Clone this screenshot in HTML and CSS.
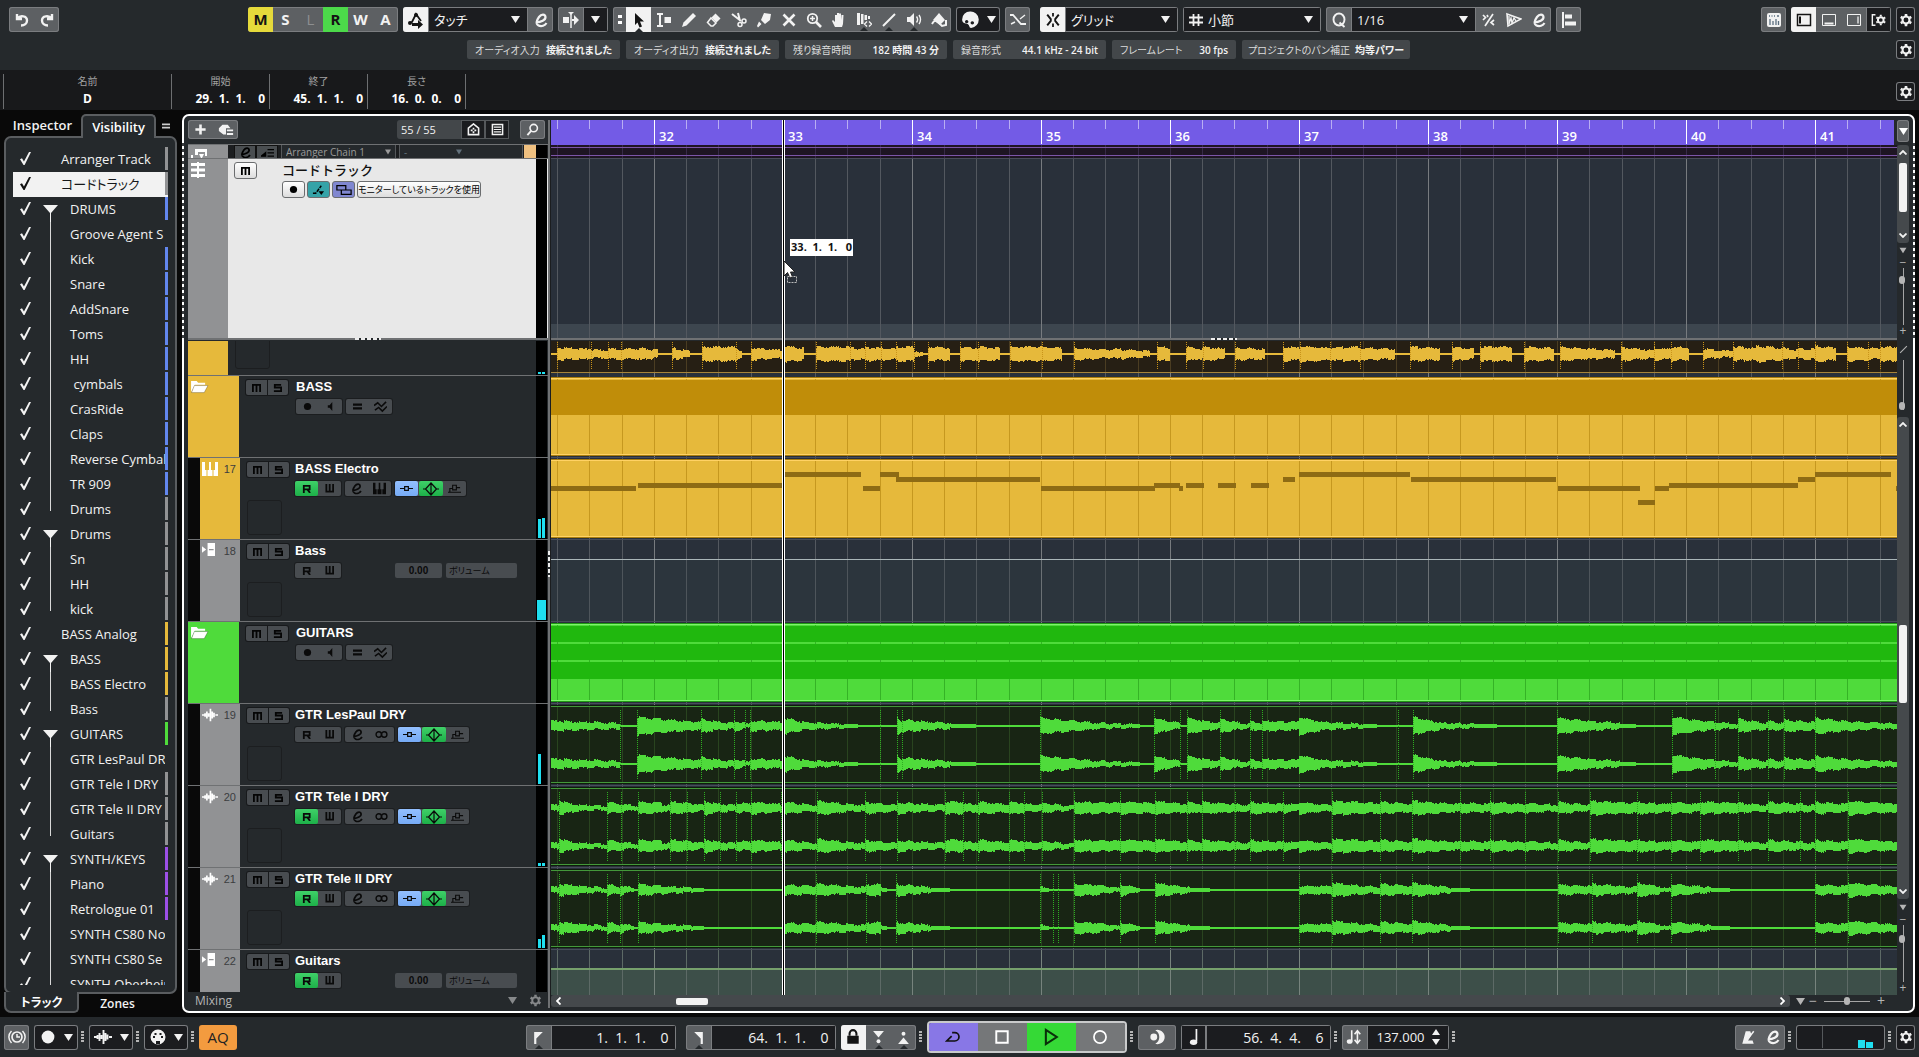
FILE: index.html
```html
<!DOCTYPE html>
<html lang="ja">
<head>
<meta charset="utf-8">
<meta name="viewport" content="width=device-width, initial-scale=1">
<title>Project</title>
<link rel="stylesheet" href="styles.css">
</head>
<body>
<svg class="sprite" aria-hidden="true">
  <symbol id="undo" viewBox="0 0 16 16"><path d="M3 2v5h5M3.500 6.500C6 3 13 3.500 13 8.500c0 3-2.500 5-6 5" fill="none" stroke="currentColor" stroke-width="2.400"/></symbol>
  <symbol id="redo" viewBox="0 0 16 16"><path d="M13 2v5H8M12.500 6.500C10 3 3 3.500 3 8.500c0 3 2.500 5 6 5" fill="none" stroke="currentColor" stroke-width="2.400"/></symbol>
  <symbol id="auto" viewBox="0 0 18 18"><path d="M2 12l3-1 4-8 5 7" fill="none" stroke="currentColor" stroke-width="1.800"/><circle cx="9" cy="4" r="2" fill="currentColor"/><circle cx="3" cy="12" r="2" fill="currentColor"/><path d="M5 12h6v-3l5 4.500-5 4.500v-3H5z" fill="currentColor"/></symbol>
  <symbol id="e" viewBox="0 0 16 16"><path d="M3 10.500C8 10 12.800 8 12.500 5S8.500 1.500 6 5s-3.500 7-.5 8.500 6.500 0 8-2.500" fill="none" stroke="currentColor" stroke-width="2.200"/></symbol>
  <symbol id="scroll" viewBox="0 0 18 18"><path d="M1 6h6v6H1zM10 8h2V4l5 5-5 5v-4h-2z" fill="currentColor"/><path d="M9 2v15" stroke="currentColor" stroke-width="1.500"/><path d="M6 1h6L9 4z" fill="currentColor"/></symbol>
  <symbol id="tri" viewBox="0 0 10 10"><path d="M0 1h10L5 9z" fill="currentColor"/></symbol>
  <symbol id="arrow" viewBox="0 0 16 16"><path d="M4 1l9 8.500H9l2 5-2.500 1-2-5L4 13z" fill="currentColor"/></symbol>
  <symbol id="range" viewBox="0 0 16 16"><path d="M1 2h6M1 14h6M4 2v12" stroke="currentColor" stroke-width="2" fill="none"/><path d="M8.500 5H15v6H8.500z" fill="currentColor"/></symbol>
  <symbol id="pencil" viewBox="0 0 16 16"><path d="M1 15l1.500-4.500L12 1l3 3-9.500 9.500z" fill="currentColor"/></symbol>
  <symbol id="eraser" viewBox="0 0 16 16"><path d="M9.500 1.500l5 5-4 4-5-5z" fill="currentColor"/><path d="M5 6l5 5-3 3H5l-3.500-3.500z" fill="none" stroke="currentColor" stroke-width="1.500"/></symbol>
  <symbol id="scissors" viewBox="0 0 16 16"><path d="M1 2l9 7M7 1l2 8" stroke="currentColor" stroke-width="2"/><circle cx="13" cy="9" r="2" fill="none" stroke="currentColor" stroke-width="1.500"/><circle cx="9" cy="12.500" r="2" fill="none" stroke="currentColor" stroke-width="1.500"/></symbol>
  <symbol id="glue" viewBox="0 0 16 16"><path d="M8 1l7 1-1 6-5 4-4-4zM3 9.500l2.500 2.500L2 15.500 1 14z" fill="currentColor"/></symbol>
  <symbol id="x" viewBox="0 0 16 16"><path d="M2.500 2.500l11 11M13.500 2.500l-11 11" stroke="currentColor" stroke-width="2.600"/></symbol>
  <symbol id="zoom" viewBox="0 0 16 16"><circle cx="6.500" cy="6.500" r="4.700" fill="none" stroke="currentColor" stroke-width="1.800"/><path d="M10 10l5 5" stroke="currentColor" stroke-width="2.600"/><path d="M4 6.500h5M6.500 4v5" stroke="currentColor" stroke-width="1.500"/></symbol>
  <symbol id="hand" viewBox="0 0 16 16"><path d="M4 15L1 9l1-1 2 2V3h2v5V1h2v7V1.500h2V8l.5-5h2L12 12l-1 3z" fill="currentColor"/></symbol>
  <symbol id="comp" viewBox="0 0 16 16"><path d="M1 1h3v12H1zM5 2h2.500v10H5zM8.500 3H11v5H8.500zM12 4h2v3h-2z" fill="currentColor"/><path d="M11 9.500L8.500 12l2.500 2.500M13 9.500l2.500 2.500-2.500 2.500" stroke="currentColor" fill="none" stroke-width="1.300"/></symbol>
  <symbol id="line" viewBox="0 0 16 16"><path d="M2 14L14 2" stroke="currentColor" stroke-width="2"/></symbol>
  <symbol id="spk" viewBox="0 0 16 16"><path d="M1 5h3l4-4v13l-4-4H1z" fill="currentColor"/><path d="M10.500 4.500c1.500 2 1.500 4 0 6M13 3c2 3 2 6 0 9" stroke="currentColor" fill="none" stroke-width="1.400"/></symbol>
  <symbol id="fill" viewBox="0 0 16 16"><path d="M8 1l6 7-5 5-7-5z" fill="currentColor"/><path d="M1 12c2-4 4-4 7-1l3 3 4-1V8" fill="none" stroke="currentColor" stroke-width="2"/></symbol>
  <symbol id="palette" viewBox="0 0 16 16"><path fill-rule="evenodd" d="M8 .5A7 7 0 0 1 9 15c-2 0-1-2-3-3.500C4 11 1 11 1 7.500A7 7 0 0 1 8 .5zM5 8a1.500 1.500 0 1 0 .1 0zM10 9a1.500 1.500 0 1 0 .1 0z" fill="currentColor"/></symbol>
  <symbol id="cross" viewBox="0 0 18 18"><path d="M1 4h3l8 9h5" fill="none" stroke="currentColor" stroke-width="1.800"/><path d="M11 8l5-4M2 13l4-2" stroke="currentColor" stroke-width="1.400"/></symbol>
  <symbol id="snap" viewBox="0 0 18 18"><path d="M9 1v4M9 13v4" stroke="currentColor" stroke-width="2"/><path d="M2.500 3l4 5v2l-4 5M15.500 3l-4 5v2l4 5" stroke="currentColor" stroke-width="2.200" fill="none"/></symbol>
  <symbol id="hash" viewBox="0 0 14 14"><path d="M4.500 1v12M9.500 1v12M0 4.500h14M0 9.500h14" stroke="currentColor" stroke-width="1.800"/></symbol>
  <symbol id="q" viewBox="0 0 16 16"><ellipse cx="8" cy="7.500" rx="5.500" ry="6" fill="none" stroke="currentColor" stroke-width="1.900"/><path d="M8.500 10.500l5 4.500" stroke="currentColor" stroke-width="1.900"/></symbol>
  <symbol id="iq" viewBox="0 0 16 16"><path d="M12 2L4 14M2 3l2.500 2.500L2 8M6 3l1 2M13 8l-3 2.500L13 13" stroke="currentColor" stroke-width="1.700" fill="none"/></symbol>
  <symbol id="warp" viewBox="0 0 16 16"><path d="M1 2l14 5L2 14z" fill="none" stroke="currentColor" stroke-width="1.600"/><path d="M3 4v8l2-6 1 5 2-5 2 3" fill="none" stroke="currentColor" stroke-width="1.300"/></symbol>
  <symbol id="align" viewBox="0 0 16 16"><path d="M1 0h2v16H1zM4 2.500h7v4H4zM4 9.500h11v4H4z" fill="currentColor"/></symbol>
  <symbol id="kbd" viewBox="0 0 16 16"><rect x="1" y="1" width="14" height="14" rx="2" fill="currentColor"/><path d="M4 7v6M7 9v4M10 7v6M12.500 9v4M3 4h1M5.500 4h1M8 4h1M11 4h2" stroke="#5b6f80" stroke-width="1.300"/></symbol>
  <symbol id="zl" viewBox="0 0 16 16"><path d="M1.500 2.500h13v11h-13z" fill="none" stroke="currentColor" stroke-width="1.500"/><path d="M4 4.500v7" stroke="currentColor" stroke-width="2"/></symbol>
  <symbol id="zb" viewBox="0 0 16 16"><path d="M1.500 2.500h13v11h-13z" fill="none" stroke="currentColor" stroke-width="1"/><path d="M3.500 11.500h9" stroke="currentColor" stroke-width="2"/></symbol>
  <symbol id="zr" viewBox="0 0 16 16"><path d="M1.500 2.500h13v11h-13z" fill="none" stroke="currentColor" stroke-width="1"/><path d="M12 4.500v7" stroke="currentColor" stroke-width="1.300"/></symbol>
  <symbol id="gear" viewBox="0 0 16 16"><circle cx="8" cy="8" r="4" fill="none" stroke="currentColor" stroke-width="2.400"/><path d="M8 1v2.500M8 12.500V15M2 4.500l2 1.200M12 10.300l2 1.200M14 4.500l-2 1.200M4 10.300l-2 1.200" stroke="currentColor" stroke-width="3"/></symbol>
  <symbol id="zg" viewBox="0 0 18 16"><path d="M5 2H1.500v12H5" fill="none" stroke="currentColor" stroke-width="1.600"/><circle cx="11" cy="8" r="3.200" fill="none" stroke="currentColor" stroke-width="2.200"/><path d="M11 2v2M11 12v2M6 5l1.500 1M14.500 10l1.500 1M16 5l-1.500 1M7.500 10L6 11" stroke="currentColor" stroke-width="2.200"/></symbol>
  <symbol id="plus" viewBox="0 0 14 14"><path d="M7 1.500v11M1.500 7h11" stroke="currentColor" stroke-width="2.800"/></symbol>
  <symbol id="preset" viewBox="0 0 18 16"><path d="M5 2h6l3 4H9v7H6L1 9V6z" fill="currentColor"/><path d="M10 8.500h7M10 12.500h7" stroke="currentColor" stroke-width="2"/></symbol>
  <symbol id="house" viewBox="0 0 14 14"><path d="M1.500 5.500L7 1l5.500 4.500v7h-11z" fill="none" stroke="currentColor" stroke-width="1.700"/><path d="M4 8h2M8 8h2M7 5v2M7 9v2" stroke="currentColor" stroke-width="1.800"/></symbol>
  <symbol id="list" viewBox="0 0 14 14"><path d="M1.500 1.500h11v11h-11z" fill="none" stroke="currentColor" stroke-width="1.600"/><path d="M3 4.500h8M3 7h8M3 9.500h8" stroke="currentColor" stroke-width="1.300"/></symbol>
  <symbol id="find" viewBox="0 0 14 14"><circle cx="8.300" cy="5.500" r="4" fill="none" stroke="currentColor" stroke-width="1.700"/><path d="M5.500 8.500L1.500 13" stroke="currentColor" stroke-width="2"/></symbol>
  <symbol id="chord" viewBox="0 0 16 16"><path d="M8 0v16" stroke="currentColor" stroke-width="2"/><path d="M1 2.500h14M1 8h14M1 13.500h14" stroke="currentColor" stroke-width="3.200"/></symbol>
  <symbol id="arr" viewBox="0 0 18 12"><path d="M1 7h2v5H1zM5 1h12v7h-2V4H8v3H5zM9 6h5l-2.500 5z" fill="currentColor"/></symbol>
  <symbol id="folder" viewBox="0 0 20 16"><path d="M1 14V2h6l1.500 2H16v2H5z" fill="currentColor"/><path d="M4.500 7H19l-4 7.500H1.500z" fill="currentColor" stroke="#00000050" stroke-width=".8"/></symbol>
  <symbol id="keys" viewBox="0 0 16 14"><path d="M0 0h3v8h1.500v6H0zM5.500 14V8H7V0h2v8h1.500v6zM13 0h3v14h-4.500V8H13z" fill="currentColor"/></symbol>
  <symbol id="chan" viewBox="0 0 14 14"><path d="M0 3.500L4.500 7 0 10.500z" fill="currentColor"/><path fill-rule="evenodd" d="M6 0h8v14H6zM7.500 6.500v1.200h5V6.500z" fill="currentColor"/></symbol>
  <symbol id="wave" viewBox="0 0 18 14"><path d="M0 7h3M3.500 5v4M5.500 3v8M7.500 5v4M9.500 0v14M11.500 3v8M13.500 4.500v5M15 7h3" stroke="currentColor" stroke-width="1.900"/></symbol>
  <symbol id="m" viewBox="0 0 10 10"><path d="M1 10V2h8v8M5 2v8" fill="none" stroke="currentColor" stroke-width="2"/></symbol>
  <symbol id="s" viewBox="0 0 10 10"><path d="M9 2H2v3h7v4H1" fill="none" stroke="currentColor" stroke-width="2"/></symbol>
  <symbol id="r" viewBox="0 0 10 10"><path d="M2 10V2h6.500v4H2M6 6l3 4" fill="none" stroke="currentColor" stroke-width="2"/></symbol>
  <symbol id="w" viewBox="0 0 10 10"><path d="M1.500 0v8.500h7.500V0M5.200 0v8" fill="none" stroke="currentColor" stroke-width="2"/></symbol>
  <symbol id="dot" viewBox="0 0 10 10"><circle cx="5" cy="5" r="4" fill="currentColor"/></symbol>
  <symbol id="mon" viewBox="0 0 10 10"><path d="M2 3.500h2L7 0v10L4 6.500H2z" fill="currentColor"/></symbol>
  <symbol id="eq" viewBox="0 0 10 10"><path d="M0 3h10M0 7h10" stroke="currentColor" stroke-width="2.400"/></symbol>
  <symbol id="zig" viewBox="0 0 14 12"><path d="M0 5l4-3 4 4 5-5M1 10l4-3 4 4 5-5" fill="none" stroke="currentColor" stroke-width="1.700"/></symbol>
  <symbol id="oo" viewBox="0 0 12 8"><circle cx="3.500" cy="4" r="2.500" fill="none" stroke="currentColor" stroke-width="1.300"/><circle cx="8.500" cy="4" r="2.500" fill="none" stroke="currentColor" stroke-width="1.300"/></symbol>
  <symbol id="ins" viewBox="0 0 14 10"><path d="M0 5h5M9 5h5M5 3h4v4H5z" fill="none" stroke="currentColor" stroke-width="1.300"/></symbol>
  <symbol id="eqd" viewBox="0 0 16 14"><path d="M0 7h3M13 7h3M8 1L2.500 7 8 13l5.500-6zM8 1v12" fill="none" stroke="currentColor" stroke-width="1.200"/></symbol>
  <symbol id="snd" viewBox="0 0 14 10"><path d="M0 9h14M2 9V5h3M9 4h4M5 1.500h4v5H5z" fill="none" stroke="currentColor" stroke-width="1.200"/></symbol>
  <symbol id="flagl" viewBox="0 0 10 12"><path d="M1 1h8L3 7v5H1z" fill="currentColor"/></symbol>
  <symbol id="flagr" viewBox="0 0 10 12"><path d="M9 1H1l6 6v5h2z" fill="currentColor"/></symbol>
  <symbol id="lock" viewBox="0 0 12 14"><path d="M1 6h10v7H1z" fill="currentColor"/><path d="M3 6V4a3 3 0 0 1 6 0v2" fill="none" stroke="currentColor" stroke-width="1.800"/></symbol>
  <symbol id="pin" viewBox="0 0 10 12"><path d="M0 0h10L5 6z" fill="currentColor"/><circle cx="5" cy="9.500" r="1.800" fill="currentColor"/></symbol>
  <symbol id="pout" viewBox="0 0 10 12"><path d="M0 12h10L5 6z" fill="currentColor"/><circle cx="5" cy="2.500" r="1.800" fill="currentColor"/></symbol>
  <symbol id="cycle" viewBox="0 0 18 14"><path d="M8 2h3a4.500 4.500 0 0 1 0 9.500H2L7.500 6" fill="none" stroke="currentColor" stroke-width="1.900"/></symbol>
  <symbol id="stop" viewBox="0 0 14 14"><path d="M2 2h10v10H2z" fill="none" stroke="currentColor" stroke-width="1.700"/></symbol>
  <symbol id="play" viewBox="0 0 14 14"><path d="M3 1.500L11.500 7 3 12.500z" fill="none" stroke="currentColor" stroke-width="1.600"/></symbol>
  <symbol id="rec" viewBox="0 0 14 14"><circle cx="7" cy="7" r="5.300" fill="none" stroke="currentColor" stroke-width="1.500"/></symbol>
  <symbol id="punch" viewBox="0 0 14 14"><circle cx="4.200" cy="7" r="3" fill="currentColor"/><path d="M5.500 1A6.300 6.300 0 1 1 5.500 13a7 7 0 0 0 3.500-6A7 7 0 0 0 5.500 1z" fill="currentColor"/></symbol>
  <symbol id="note" viewBox="0 0 10 14"><path d="M8 0v11" stroke="currentColor" stroke-width="1.500"/><ellipse cx="5.500" cy="11.500" rx="3.200" ry="2.400" fill="currentColor"/></symbol>
  <symbol id="tempo" viewBox="0 0 14 14"><path d="M5 1v10" stroke="currentColor" stroke-width="1.400"/><ellipse cx="3.200" cy="11" rx="2.500" ry="2" fill="currentColor"/><path d="M10 2v10M7.500 4.500L10 1.500l2.500 3M7.500 9.500l2.500 3 2.500-3" stroke="currentColor" stroke-width="1.400" fill="none"/></symbol>
  <symbol id="updn" viewBox="0 0 8 18"><path d="M0 7l4-6 4 6zM0 11h8l-4 6z" fill="currentColor"/></symbol>
  <symbol id="metro" viewBox="0 0 12 14"><path d="M1 13L4 2h4l1 3-3 5h4l1 3z" fill="currentColor"/><path d="M5 10l6-8" stroke="currentColor" stroke-width="1.300"/></symbol>
  <symbol id="clock" viewBox="0 0 18 16"><circle cx="9" cy="8" r="5" fill="none" stroke="currentColor" stroke-width="1.700"/><path d="M9 5v3h3M3.500 2C0 5.500 0 10.500 3.500 14M14.500 2c3.500 3.500 3.500 8.500 0 12" fill="none" stroke="currentColor" stroke-width="1.500"/></symbol>
  <symbol id="midi" viewBox="0 0 16 16"><path fill-rule="evenodd" d="M8 .5a7.500 7.500 0 1 1 0 15 7.500 7.500 0 0 1 0-15zM6 12v3h4v-3zM3 7v2h2V7zM11 7v2h2V7zM4.500 4v2h2V4zM9.500 4v2h2V4z" fill="currentColor"/></symbol>
  <symbol id="up" viewBox="0 0 8 5"><path d="M.5 4.500L4 1l3.500 3.500" fill="none" stroke="currentColor" stroke-width="1.800"/></symbol>
  <symbol id="down" viewBox="0 0 8 5"><path d="M.5.5L4 4 7.500.5" fill="none" stroke="currentColor" stroke-width="1.800"/></symbol>
  <symbol id="left" viewBox="0 0 5 8"><path d="M4.500.5L1 4l3.500 3.500" fill="none" stroke="currentColor" stroke-width="1.800"/></symbol>
  <symbol id="right" viewBox="0 0 5 8"><path d="M.5.5L4 4 .5 7.500" fill="none" stroke="currentColor" stroke-width="1.800"/></symbol>
  <symbol id="cfol" viewBox="0 0 14 12"><path d="M1 10h3l6-8" fill="none" stroke="currentColor" stroke-width="1.500" stroke-dasharray="4 1"/><path d="M7 8h6l-3 4z" fill="currentColor"/></symbol>
  <symbol id="lanes" viewBox="0 0 18 12"><path d="M1 1h10v5H1zM6 6h11v5H6z" fill="none" stroke="currentColor" stroke-width="1.400"/></symbol>
  <symbol id="fold2" viewBox="0 0 14 10"><path d="M0 9l5-4v4zM7 2h7M7 5.500h7M7 9h7" fill="currentColor" stroke="currentColor" stroke-width="1.400"/></symbol>
</svg>

<header class="toolbar">
  <div class="group"><button aria-label="元に戻す"><svg class="i"><use href="#undo"/></svg></button><button aria-label="再実行"><svg class="i"><use href="#redo"/></svg></button></div>
  <div class="center">
    <div class="group letters"><button class="mute">M</button><button>S</button><button class="off">L</button><button class="read">R</button><button>W</button><button>A</button></div>
    <div class="group"><button class="on" aria-label="オートメーション"><svg class="i l"><use href="#auto"/></svg></button><span class="drop w100"><select aria-label="オートメーションモード"><option>タッチ</option></select><svg class="t"><use href="#tri"/></svg></span><button aria-label="設定"><svg class="i"><use href="#e"/></svg></button></div>
    <div class="group"><button aria-label="オートスクロール"><svg class="i l"><use href="#scroll"/></svg></button><button class="dark" aria-label="オートスクロール設定"><svg class="t"><use href="#tri"/></svg></button></div>
    <div class="group tools"><span class="grip"></span><button class="on more" aria-label="選択"><svg class="i"><use href="#arrow"/></svg></button><button aria-label="範囲"><svg class="i"><use href="#range"/></svg></button><button aria-label="鉛筆"><svg class="i"><use href="#pencil"/></svg></button><button aria-label="消しゴム"><svg class="i"><use href="#eraser"/></svg></button><button aria-label="はさみ"><svg class="i"><use href="#scissors"/></svg></button><button aria-label="のり"><svg class="i"><use href="#glue"/></svg></button><button aria-label="ミュート"><svg class="i"><use href="#x"/></svg></button><button aria-label="ズーム"><svg class="i"><use href="#zoom"/></svg></button><button aria-label="ハンド"><svg class="i"><use href="#hand"/></svg></button><button class="more" aria-label="コンプ"><svg class="i"><use href="#comp"/></svg></button><button class="more" aria-label="ライン"><svg class="i"><use href="#line"/></svg></button><button class="more" aria-label="再生"><svg class="i"><use href="#spk"/></svg></button><button aria-label="カラー"><svg class="i"><use href="#fill"/></svg></button></div>
    <div class="group"><button class="dark wide" aria-label="カラーメニュー"><svg class="i l"><use href="#palette"/></svg><svg class="t"><use href="#tri"/></svg></button></div>
    <div class="group"><button aria-label="クロスフェード"><svg class="i l"><use href="#cross"/></svg></button></div>
    <div class="group snap"><button class="on" aria-label="スナップ"><svg class="i"><use href="#snap"/></svg></button><span class="drop w112"><select aria-label="スナップタイプ"><option>グリッド</option></select><svg class="t"><use href="#tri"/></svg></span></div>
    <div class="group"><span class="drop w136 hashed"><svg class="h"><use href="#hash"/></svg><select aria-label="グリッドタイプ"><option>小節</option></select><svg class="t"><use href="#tri"/></svg></span></div>
    <div class="group"><button aria-label="クオンタイズ"><svg class="i"><use href="#q"/></svg></button><span class="drop w125"><select aria-label="クオンタイズ値"><option>1/16</option></select><svg class="t"><use href="#tri"/></svg></span><button aria-label="反復"><svg class="i"><use href="#iq"/></svg></button><button aria-label="ワープ"><svg class="i"><use href="#warp"/></svg></button><button aria-label="クオンタイズパネル"><svg class="i"><use href="#e"/></svg></button></div>
    <div class="group"><button aria-label="整列"><svg class="i"><use href="#align"/></svg></button></div>
  </div>
  <div class="right">
    <div class="group"><button aria-label="キーボード"><svg class="i"><use href="#kbd"/></svg></button></div>
    <div class="group"><button class="on" aria-label="左ゾーン"><svg class="i"><use href="#zl"/></svg></button><button aria-label="下ゾーン"><svg class="i"><use href="#zb"/></svg></button><button aria-label="右ゾーン"><svg class="i"><use href="#zr"/></svg></button><button class="dark" aria-label="レイアウト"><svg class="i"><use href="#zg"/></svg></button></div>
    <div class="group"><button class="dark thin" aria-label="ツールバー設定"><svg class="i g"><use href="#gear"/></svg></button></div>
  </div>
</header>

<section class="status">
  <div class="chips">
    <div class="chip"><span>オーディオ入力</span><b>接続されました</b></div>
    <div class="chip"><span>オーディオ出力</span><b>接続されました</b></div>
    <div class="chip wide"><span>残り録音時間</span><b>182 時間 43 分</b></div>
    <div class="chip"><span>録音形式</span><b>44.1 kHz - 24 bit</b></div>
    <div class="chip small"><span>フレームレート</span><b>30 fps</b></div>
    <div class="chip widest"><span>プロジェクトのパン補正</span><b>均等パワー</b></div>
  </div>
  <button class="cog" aria-label="ステータス設定"><svg class="i g"><use href="#gear"/></svg></button>
</section>

<section class="info">
  <dl>
    <div class="name"><dt>名前</dt><dd>D</dd></div>
    <div><dt>開始</dt><dd>29.  1.  1.    0</dd></div>
    <div><dt>終了</dt><dd>45.  1.  1.    0</dd></div>
    <div><dt>長さ</dt><dd>16.  0.  0.    0</dd></div>
  </dl>
  <button class="cog" aria-label="情報設定"><svg class="i g"><use href="#gear"/></svg></button>
</section>

<main>
  <aside>
    <nav class="tabs"><button>Inspector</button><button class="cur">Visibility</button><svg class="menu"><use href="#eq"/></svg></nav>
    <div class="vis">
      <ul>
        <li class="gray"><label><input type="checkbox" checked>Arranger Track</label></li>
        <li class="gray sel"><label><input type="checkbox" checked>コードトラック</label></li>
        <li class="blue head"><label><input type="checkbox" checked>DRUMS</label></li>
        <li class="kid"><label><input type="checkbox" checked>Groove Agent S</label></li>
        <li class="blue kid"><label><input type="checkbox" checked>Kick</label></li>
        <li class="blue kid"><label><input type="checkbox" checked>Snare</label></li>
        <li class="blue kid"><label><input type="checkbox" checked>AddSnare</label></li>
        <li class="blue kid"><label><input type="checkbox" checked>Toms</label></li>
        <li class="blue kid"><label><input type="checkbox" checked>HH</label></li>
        <li class="blue kid"><label><input type="checkbox" checked>&nbsp;cymbals</label></li>
        <li class="blue kid"><label><input type="checkbox" checked>CrasRide</label></li>
        <li class="blue kid"><label><input type="checkbox" checked>Claps</label></li>
        <li class="blue kid"><label><input type="checkbox" checked>Reverse Cymbal</label></li>
        <li class="blue kid"><label><input type="checkbox" checked>TR 909</label></li>
        <li class="gray kid last"><label><input type="checkbox" checked>Drums</label></li>
        <li class="gray head"><label><input type="checkbox" checked>Drums</label></li>
        <li class="gray kid"><label><input type="checkbox" checked>Sn</label></li>
        <li class="gray kid"><label><input type="checkbox" checked>HH</label></li>
        <li class="gray kid last"><label><input type="checkbox" checked>kick</label></li>
        <li class="gold"><label><input type="checkbox" checked>BASS Analog</label></li>
        <li class="gold head"><label><input type="checkbox" checked>BASS</label></li>
        <li class="gold kid"><label><input type="checkbox" checked>BASS Electro</label></li>
        <li class="gray kid last"><label><input type="checkbox" checked>Bass</label></li>
        <li class="green head"><label><input type="checkbox" checked>GUITARS</label></li>
        <li class="kid"><label><input type="checkbox" checked>GTR LesPaul DRY</label></li>
        <li class="gray kid"><label><input type="checkbox" checked>GTR Tele I DRY</label></li>
        <li class="gray kid"><label><input type="checkbox" checked>GTR Tele II DRY</label></li>
        <li class="gray kid last"><label><input type="checkbox" checked>Guitars</label></li>
        <li class="purple head"><label><input type="checkbox" checked>SYNTH/KEYS</label></li>
        <li class="purple kid"><label><input type="checkbox" checked>Piano</label></li>
        <li class="purple kid"><label><input type="checkbox" checked>Retrologue 01</label></li>
        <li class="kid"><label><input type="checkbox" checked>SYNTH CS80 No</label></li>
        <li class="kid"><label><input type="checkbox" checked>SYNTH CS80 Se</label></li>
        <li class="kid"><label><input type="checkbox" checked>SYNTH Oberheim</label></li>
      </ul>
    </div>
    <nav class="tabs bottom"><button class="cur">トラック</button><button>Zones</button></nav>
  </aside>

  <section class="frame">
    <div class="tracks">
      <div class="thead">
        <div class="group sm"><button aria-label="トラックを追加"><svg class="i s"><use href="#plus"/></svg></button><button aria-label="プリセット"><svg class="i"><use href="#preset"/></svg></button></div>
        <div class="count"><span>55 / 55</span><button aria-label="フィルター"><svg class="i s"><use href="#house"/></svg></button><button aria-label="表示"><svg class="i s"><use href="#list"/></svg></button></div>
        <div class="group sm"><button aria-label="検索"><svg class="i s"><use href="#find"/></svg></button></div>
      </div>
      <div class="upper">
        <div class="arrow-row"><span class="swatch gray"><svg class="arr"><use href="#arr"/></svg></span>
          <button class="cell" aria-label="編集"><svg class="i s"><use href="#e"/></svg></button><button class="cell" aria-label="フラット"><svg class="i s"><use href="#fold2"/></svg></button>
          <span class="mini chain"><select aria-label="チェーン"><option>Arranger Chain 1</option></select><svg><use href="#tri"/></svg></span><span class="mini dash"><select aria-label="ジャンプ"><option>-</option></select><svg><use href="#tri"/></svg></span><span class="orange"></span><span class="meter"></span></div>
        <div class="chord-row"><span class="swatch gray"><svg class="i"><use href="#chord"/></svg></span>
          <div class="chord-body"><button class="lt" aria-label="ミュート"><svg class="i x"><use href="#m"/></svg></button>
            <div><h3>コードトラック</h3><div class="lts"><button class="lt" aria-label="録音"><svg class="i x"><use href="#dot"/></svg></button><button class="lt teal" aria-label="ボイシング"><svg class="i s"><use href="#cfol"/></svg></button><button class="lt violet" aria-label="レーン"><svg class="i"><use href="#lanes"/></svg></button><button class="lt long">モニターしているトラックを使用</button></div></div></div>
          <span class="meter"></span></div>
      </div>
      <div class="split"><i></i></div>
      <div class="lower">
        <div class="track part"><span class="swatch gold thin"></span><div class="body"><i class="pic"></i></div><span class="meter"><i style="height:2px"></i><i style="height:2px"></i></span></div>
        <div class="track folder"><span class="swatch gold"><svg class="f"><use href="#folder"/></svg></span><div class="body"><div class="ms"><button aria-label="ミュート"><svg class="i x"><use href="#m"/></svg></button><button aria-label="ソロ"><svg class="i x"><use href="#s"/></svg></button></div><h3>BASS</h3><div class="ctl"><div class="pair"><button aria-label="録音"><svg class="i x"><use href="#dot"/></svg></button><button aria-label="モニター"><svg class="i x"><use href="#mon"/></svg></button></div><div class="pair"><button aria-label="グループ編集"><svg class="i x"><use href="#eq"/></svg></button><button aria-label="位相"><svg class="i s"><use href="#zig"/></svg></button></div></div></div><span class="meter"></span></div>
        <div class="track kid"><span class="swatch gold"><svg class="i"><use href="#keys"/></svg>17</span><div class="body"><div class="ms"><button aria-label="ミュート"><svg class="i x"><use href="#m"/></svg></button><button aria-label="ソロ"><svg class="i x"><use href="#s"/></svg></button></div><h3>BASS Electro</h3><div class="ctl"><div class="pair"><button class="rd" aria-label="リード"><svg class="i x"><use href="#r"/></svg></button><button aria-label="ライト"><svg class="i x"><use href="#w"/></svg></button></div><div class="pair"><button aria-label="編集"><svg class="i s"><use href="#e"/></svg></button><button aria-label="音源"><svg class="i s"><use href="#keys"/></svg></button></div><div class="pair three"><button class="bl" aria-label="インサート"><svg class="i s"><use href="#ins"/></svg></button><button class="rd" aria-label="EQ"><svg class="i"><use href="#eqd"/></svg></button><button aria-label="センド"><svg class="i s"><use href="#snd"/></svg></button></div></div><i class="pic"></i></div><span class="meter"><i style="height:19px"></i><i style="height:20px"></i></span></div>
        <div class="track kid"><span class="swatch gray"><svg class="i s"><use href="#chan"/></svg>18</span><div class="body"><div class="ms"><button aria-label="ミュート"><svg class="i x"><use href="#m"/></svg></button><button aria-label="ソロ"><svg class="i x"><use href="#s"/></svg></button></div><h3>Bass</h3><div class="ctl"><div class="pair"><button aria-label="リード"><svg class="i x"><use href="#r"/></svg></button><button aria-label="ライト"><svg class="i x"><use href="#w"/></svg></button></div><input class="vol" aria-label="値" value="0.00"><button class="par">ボリューム</button></div><i class="pic"></i></div><span class="meter solid"><i style="height:20px"></i></span></div>
        <div class="track folder"><span class="swatch green"><svg class="f"><use href="#folder"/></svg></span><div class="body"><div class="ms"><button aria-label="ミュート"><svg class="i x"><use href="#m"/></svg></button><button aria-label="ソロ"><svg class="i x"><use href="#s"/></svg></button></div><h3>GUITARS</h3><div class="ctl"><div class="pair"><button aria-label="録音"><svg class="i x"><use href="#dot"/></svg></button><button aria-label="モニター"><svg class="i x"><use href="#mon"/></svg></button></div><div class="pair"><button aria-label="グループ編集"><svg class="i x"><use href="#eq"/></svg></button><button aria-label="位相"><svg class="i s"><use href="#zig"/></svg></button></div></div></div><span class="meter"></span></div>
        <div class="track kid"><span class="swatch gray"><svg class="i"><use href="#wave"/></svg>19</span><div class="body"><div class="ms"><button aria-label="ミュート"><svg class="i x"><use href="#m"/></svg></button><button aria-label="ソロ"><svg class="i x"><use href="#s"/></svg></button></div><h3>GTR LesPaul DRY</h3><div class="ctl"><div class="pair"><button aria-label="リード"><svg class="i x"><use href="#r"/></svg></button><button aria-label="ライト"><svg class="i x"><use href="#w"/></svg></button></div><div class="pair aud"><button aria-label="編集"><svg class="i s"><use href="#e"/></svg></button><button aria-label="ステレオ"><svg class="i s"><use href="#oo"/></svg></button></div><div class="pair three"><button class="bl" aria-label="インサート"><svg class="i s"><use href="#ins"/></svg></button><button class="rd" aria-label="EQ"><svg class="i"><use href="#eqd"/></svg></button><button aria-label="センド"><svg class="i s"><use href="#snd"/></svg></button></div></div><i class="pic"></i></div><span class="meter"><i style="height:30px"></i><i style="height:0"></i></span></div>
        <div class="track kid"><span class="swatch gray"><svg class="i"><use href="#wave"/></svg>20</span><div class="body"><div class="ms"><button aria-label="ミュート"><svg class="i x"><use href="#m"/></svg></button><button aria-label="ソロ"><svg class="i x"><use href="#s"/></svg></button></div><h3>GTR Tele I DRY</h3><div class="ctl"><div class="pair"><button class="rd" aria-label="リード"><svg class="i x"><use href="#r"/></svg></button><button aria-label="ライト"><svg class="i x"><use href="#w"/></svg></button></div><div class="pair aud"><button aria-label="編集"><svg class="i s"><use href="#e"/></svg></button><button aria-label="ステレオ"><svg class="i s"><use href="#oo"/></svg></button></div><div class="pair three"><button class="bl" aria-label="インサート"><svg class="i s"><use href="#ins"/></svg></button><button class="rd" aria-label="EQ"><svg class="i"><use href="#eqd"/></svg></button><button aria-label="センド"><svg class="i s"><use href="#snd"/></svg></button></div></div><i class="pic"></i></div><span class="meter"><i style="height:3px"></i><i style="height:3px"></i></span></div>
        <div class="track kid"><span class="swatch gray"><svg class="i"><use href="#wave"/></svg>21</span><div class="body"><div class="ms"><button aria-label="ミュート"><svg class="i x"><use href="#m"/></svg></button><button aria-label="ソロ"><svg class="i x"><use href="#s"/></svg></button></div><h3>GTR Tele II DRY</h3><div class="ctl"><div class="pair"><button class="rd" aria-label="リード"><svg class="i x"><use href="#r"/></svg></button><button aria-label="ライト"><svg class="i x"><use href="#w"/></svg></button></div><div class="pair aud"><button aria-label="編集"><svg class="i s"><use href="#e"/></svg></button><button aria-label="ステレオ"><svg class="i s"><use href="#oo"/></svg></button></div><div class="pair three"><button class="bl" aria-label="インサート"><svg class="i s"><use href="#ins"/></svg></button><button class="rd" aria-label="EQ"><svg class="i"><use href="#eqd"/></svg></button><button aria-label="センド"><svg class="i s"><use href="#snd"/></svg></button></div></div><i class="pic"></i></div><span class="meter"><i style="height:9px"></i><i style="height:13px"></i></span></div>
        <div class="track kid"><span class="swatch gray"><svg class="i s"><use href="#chan"/></svg>22</span><div class="body"><div class="ms"><button aria-label="ミュート"><svg class="i x"><use href="#m"/></svg></button><button aria-label="ソロ"><svg class="i x"><use href="#s"/></svg></button></div><h3>Guitars</h3><div class="ctl"><div class="pair"><button class="rd" aria-label="リード"><svg class="i x"><use href="#r"/></svg></button><button aria-label="ライト"><svg class="i x"><use href="#w"/></svg></button></div><input class="vol" aria-label="値" value="0.00"><button class="par">ボリューム</button></div><i class="pic"></i></div><span class="meter"></span></div>
      </div>
      <div class="mixing"><span>Mixing</span><svg class="t"><use href="#tri"/></svg><svg class="i s"><use href="#gear"/></svg></div>
    </div>
    <div class="vsplit"><i></i></div>
    <div class="time">
      <div class="ruler"></div>
      <div class="lane" data-kind="arranger"></div>
      <div class="lane" data-kind="chord"></div>
      <div class="split"><i></i></div>
      <div class="lanes">
        <div class="lane" data-kind="analog"></div>
        <div class="lane" data-kind="bassfolder"></div>
        <div class="lane" data-kind="electro"></div>
        <div class="lane" data-kind="bass"></div>
        <div class="lane" data-kind="guitars"></div>
        <div class="lane" data-kind="lespaul"></div>
        <div class="lane" data-kind="tele1"></div>
        <div class="lane" data-kind="tele2"></div>
        <div class="lane" data-kind="group"></div>
      </div>
      <div class="hscroll"><div class="bar"><svg class="cv"><use href="#left"/></svg><i></i><svg class="cv"><use href="#right"/></svg></div><svg class="t"><use href="#tri"/></svg><span>−</span><input type="range" aria-label="横ズーム" value="50"><span>+</span></div>
      <div class="cursor"><span class="tip">33.  1.  1.   0</span><svg class="mouse" viewBox="0 0 16 24"><path d="M1 1v15l3.500-3.500L7 18l2.500-1L7.500 12H12z" fill="#fff" stroke="#222"/><rect x="4.500" y="16.500" width="9" height="6" fill="none" stroke="#bbb" stroke-dasharray="2 1"/></svg></div>
    </div>
    <div class="side">
      <button class="top" aria-label="メニュー"><svg class="t"><use href="#tri"/></svg></button>
      <div class="vbar up"><svg class="ch"><use href="#up"/></svg><i></i><svg class="ch"><use href="#down"/></svg></div>
      <div class="vz"><svg class="t"><use href="#tri"/></svg><span>−</span><input type="range" aria-label="縦ズーム" value="16"><span>+</span></div>
      <div class="vz two"><svg class="i x"><use href="#line"/></svg><input type="range" aria-label="波形ズーム" value="100"></div>
      <div class="vbar low"><svg class="ch"><use href="#up"/></svg><i></i><svg class="ch"><use href="#down"/></svg></div>
      <div class="vz end"><svg class="t"><use href="#tri"/></svg><span>−</span><input type="range" aria-label="トラックズーム" value="20"><span>+</span></div>
    </div>
  </section>
</main>

<footer class="transport">
  <div class="group"><button aria-label="時計"><svg class="i l"><use href="#clock"/></svg></button></div>
  <div class="group"><button class="dark wide" aria-label="録音モード"><svg class="i"><use href="#dot"/></svg><svg class="t"><use href="#tri"/></svg></button></div><i class="dots"></i>
  <div class="group"><button class="dark wide" aria-label="オーディオ録音モード"><svg class="i l"><use href="#wave"/></svg><svg class="t"><use href="#tri"/></svg></button></div><i class="dots"></i>
  <div class="group"><button class="dark wide" aria-label="MIDI録音モード"><svg class="i"><use href="#midi"/></svg><svg class="t"><use href="#tri"/></svg></button></div><i class="dots"></i>
  <button class="aq">AQ</button>
  <div class="mid">
    <div class="group"><button class="more" aria-label="左ロケーター"><svg class="i s"><use href="#flagl"/></svg></button><input class="pos" aria-label="左ロケーター位置" value="1.  1.  1.    0"></div>
    <div class="group gapr"><button class="more" aria-label="右ロケーター"><svg class="i s"><use href="#flagr"/></svg></button><input class="pos" aria-label="右ロケーター位置" value="64.  1.  1.    0"></div>
    <div class="group lk"><button class="on" aria-label="ロック"><svg class="i"><use href="#lock"/></svg></button><button class="more" aria-label="パンチイン"><svg class="i s"><use href="#pin"/></svg></button><button class="more" aria-label="パンチアウト"><svg class="i s"><use href="#pout"/></svg></button></div><i class="dots"></i>
    <div class="deck"><button class="cy" aria-label="サイクル"><svg class="i"><use href="#cycle"/></svg></button><button class="st" aria-label="停止"><svg class="i"><use href="#stop"/></svg></button><button class="pl" aria-label="再生"><svg class="i l"><use href="#play"/></svg></button><button class="st" aria-label="録音"><svg class="i"><use href="#rec"/></svg></button></div><i class="dots"></i>
    <div class="group"><button class="pun" aria-label="プリロール"><svg class="i"><use href="#punch"/></svg></button></div>
    <div class="group gapn"><button class="dark nt" aria-label="表示形式"><svg class="i"><use href="#note"/></svg></button><input class="pos" aria-label="現在位置" value="56.  4.  4.    6"></div><i class="dots"></i>
    <div class="group"><button aria-label="テンポトラック"><svg class="i"><use href="#tempo"/></svg></button><input class="pos tempo" aria-label="テンポ" value="137.000"><svg class="ud"><use href="#updn"/></svg></div><i class="dots"></i>
  </div>
  <div class="group"><button aria-label="メトロノーム"><svg class="i"><use href="#metro"/></svg></button><button aria-label="メトロノーム設定"><svg class="i"><use href="#e"/></svg></button></div><i class="dots"></i>
  <div class="group out"><span class="lvl"><i style="height:8px"></i><i style="height:6px"></i></span></div><i class="dots"></i>
  <div class="group"><button class="dark thin" aria-label="トランスポート設定"><svg class="i g"><use href="#gear"/></svg></button></div>
</footer>
<script src="timeline.js"></script>
</body>
</html>
```
FILE: styles.css
```css
* { box-sizing: border-box; }
body {
  margin: 0; height: 100vh; min-height: 600px; display: flex; flex-direction: column;
  background: #090909; color: #f2f2f2; overflow: hidden;
  font: 13px/18px "Open Sans", "Noto Sans", "Noto Sans CJK JP", sans-serif;
  font-feature-settings: "palt" 1;
}
.sprite { display: none; }
button, input, select { font: inherit; color: inherit; margin: 0; padding: 0; border: 0; background: none; border-radius: 0; font-feature-settings: inherit; }
button { display: flex; align-items: center; justify-content: center; }
h3, ul, dl, dd { margin: 0; padding: 0; list-style: none; }
svg { display: block; flex: none; }
.i { width: 16px; height: 16px; }
.i.l { width: 18px; height: 18px; }
.i.s { width: 13px; height: 13px; }
.i.x { width: 9px; height: 9px; }
.t { width: 9px; height: 9px; }

/* toolbar */
.toolbar { display: flex; align-items: flex-start; padding: 7px 4px 0 9px; height: 36px; flex: none; background: #25292c; }
.toolbar .center { display: flex; gap: 5px; margin-left: 189px; flex: none; }
.toolbar .right { display: flex; gap: 5px; margin-left: auto; }
.group { display: flex; height: 25px; flex: none; border-radius: 3px; background: #5d6063; box-shadow: inset 0 0 0 1px #7b7d80; overflow: hidden; align-items: center; }
.group button { width: 25px; height: 23px; position: relative; }
.group .on { background: #f2f2f2; color: #141414; height: 25px; }
.group .dark { background: #1b1c1f; box-shadow: inset 0 0 0 1px #7b7d80; height: 25px; }
.group .wide { width: 44px; gap: 8px; border-radius: 3px; }
.group .thin { width: 19px; border-radius: 3px; }
.letters button { font: bold 15px/23px "Open Sans", sans-serif; height: 25px; }
.letters .mute { background: #e6da3b; color: #141414; }
.letters .read { background: #4cda4a; color: #141414; }
.letters .off { color: #8d8f91; font-weight: 400; }
.drop { position: relative; display: flex; align-items: center; height: 25px; background: #1b1c1f; box-shadow: inset 0 0 0 1px #7b7d80; }
.drop select { appearance: none; width: 100%; height: 23px; padding-left: 6px; font-size: 13px; outline: 0; }
.drop .t { position: absolute; right: 8px; pointer-events: none; }
.w100 { width: 100px; } .w112 { width: 113px; } .w125 { width: 125px; } .w136 { width: 138px; }
.hashed .h { width: 14px; height: 14px; margin-left: 6px; }
.hashed select { padding-left: 5px; }
.grip { width: 13px; height: 9px; background: linear-gradient(#fff 3px, #0000 3px 6px, #fff 6px) center / 4px 9px no-repeat; }
.tools { width: 338px; }
.more::after { content: ""; position: absolute; bottom: 0; left: 9px; border: 4px solid transparent; border-top: 0; border-bottom-color: #25292c; }
.snap { margin-left: 5px; }

/* status chips */
.status { position: relative; display: flex; justify-content: center; padding-top: 4px; height: 34px; flex: none; background: #25292c; }
.chips { display: flex; gap: 6px; margin-right: 42px; }
.chip { display: flex; align-items: center; justify-content: space-between; width: 153px; height: 19px; padding: 0 8px; border-radius: 2px; background: #43474a; font-size: 10px; white-space: nowrap; color: #dcdcdc; }
.chip.wide { width: 162px; } .chip.small { width: 124px; } .chip.widest { width: 168px; padding: 0 6px; }
.chip b { font-weight: 600; color: #f2f2f2; }
.cog { position: absolute; right: 4px; width: 19px; height: 19px; border-radius: 3px; background: #1b1c1f; box-shadow: inset 0 0 0 1px #7b7d80; }
.i.g { width: 14px; height: 14px; }

/* info line */
.info { position: relative; display: flex; height: 40px; flex: none; padding: 4px 0 1px 3px; background: #18191b; }
.info dl { display: flex; }
.info dl div { width: 98px; border-right: 1px solid #6d6f71; padding: 0 4px; }
.info dl .name { width: 169px; border-left: 1px solid #6d6f71; text-align: center; }
.info dt { font-size: 10px; line-height: 15px; color: #a2a2a2; text-align: center; }
.info dd { font: bold 12px/20px "Open Sans", sans-serif; white-space: pre; text-align: right; color: #fff; }
.info .name dd { text-align: center; }
.info .cog { top: 12px; }

/* visibility panel */
main { display: flex; flex: 1; min-height: 0; padding: 4px 4px 4px 0; }
aside { width: 182px; flex: none; padding: 0 5px 0 4px; display: flex; flex-direction: column; }
.tabs { display: flex; height: 22px; flex: none; position: relative; z-index: 1; }
.tabs button { font-weight: 600; width: 77px; height: 22px; }
.tabs .cur { width: 75px; background: #25292c; border: 2px solid #5a5d60; border-bottom: 0; border-radius: 5px 5px 0 0; height: 24px; color: #fff; }
.tabs .menu { width: 8px; height: 10px; margin: 7px 0 0 6px; color: #ccc; }
.vis { flex: 1; min-height: 0; border: 2px solid #5a5d60; border-radius: 7px; background: #25292c; padding: 9px 7px 7px; display: flex; }
.vis ul { overflow: hidden; flex: 1; }
.vis li { height: 25px; position: relative; padding-bottom: 2px; }
.vis label { display: flex; align-items: center; height: 23px; margin-right: 3px; overflow: hidden; white-space: nowrap; }
.vis input { appearance: none; flex: none; width: 11px; height: 13px; margin: 0 30px 0 7px; background: #f2f2f2; clip-path: polygon(0 55%, 18% 48%, 36% 74%, 82% 0, 100% 0, 42% 100%, 32% 100%); }
.vis li::after { content: ""; position: absolute; right: 0; top: 0; width: 3px; height: 23px; background: var(--c, transparent); }
.vis .sel { background: #f2f2f2; color: #16181a; }
.vis .sel input { background: #111; }
.vis .head input, .vis .kid input { margin-right: 39px; }
.vis .head::before { content: ""; position: absolute; left: 30px; top: 8px; width: 15px; height: 17px; background: #f2f2f2; clip-path: polygon(0 0, 100% 0, 8px 8px, 8px 17px, 7px 17px, 7px 8px); }
.vis .kid::before { content: ""; position: absolute; left: 37px; top: 0; width: 1px; height: 25px; background: #d8d8d8; }
.vis .last::before { height: 14px; }
.gray { --c: #919294; } .blue { --c: #6286ee; } .gold { --c: #e6b93b; } .green { --c: #4fdb3b; } .purple { --c: #9c4fe6; }
.tabs.bottom { height: 19px; }
.tabs.bottom .cur { border: 2px solid #5a5d60; border-top: 0; border-radius: 0 0 5px 7px; margin-top: -2px; height: 21px; padding-top: 3px; }
.tabs.bottom button { height: 20px; font-size: 12px; }

/* project frame */
.frame { flex: 1; min-width: 0; position: relative; display: flex; background: #25292c; border: 2px solid #fff; border-radius: 7px; }
.frame::before, .frame::after { content: ""; position: absolute; top: 27px; left: -2px; width: 2px; height: 197px; background: repeating-linear-gradient(#3a3d40 0 3px, #0000 3px 6px); }
.frame::after { left: auto; right: -2px; }
.tracks { width: 364px; flex: none; padding-left: 4px; display: flex; flex-direction: column; }
.thead { display: flex; height: 28px; flex: none; padding: 4px 3px 0 0; }
.group.sm { height: 19px; }
.group.sm button { height: 19px; }
.count { display: flex; height: 19px; width: 112px; margin: 0 11px 0 auto; background: #43474a; border-radius: 3px; font-size: 11px; line-height: 19px; padding-left: 4px; }
.count span { flex: 1; }
.count button { width: 24px; background: #1b1c1f; box-shadow: inset 0 0 0 1px #55585b; }
.upper { height: 194px; flex: none; border-top: 1px solid #6f7173; display: flex; flex-direction: column; }
.arrow-row { display: flex; height: 14px; border-bottom: 1px solid #6f7173; overflow: hidden; background: #1c1e20; }
.swatch { display: flex; flex: none; width: 51px; background: var(--c); color: #fff; padding: 3px 6px 0 2px; justify-content: space-between; font-size: 11px; line-height: 16px; }
.arrow-row .swatch, .chord-row .swatch, .swatch.thin { width: 40px; }
.arr { width: 18px; height: 12px; }
.cell { width: 22px; height: 14px; background: #4a4e51; color: #000; box-shadow: inset 0 0 0 1px #111; }
.cell:first-of-type { margin-left: 6px; }
.mini { display: flex; align-items: center; height: 14px; margin-left: 3px; border: 1px solid #55585b; border-width: 0 1px; padding: 0 4px; width: 115px; background: #25292c; color: #9a9a9a; }
.mini select { appearance: none; flex: 1; font-size: 10px; line-height: 12px; height: 13px; }
.mini svg { width: 6px; height: 6px; }
.mini.dash { width: 124px; padding-right: 60px; color: #64727c; }
.orange { width: 12px; background: #efc080; margin-left: auto; }
.meter { width: 11px; flex: none; background: #000; display: flex; align-items: flex-end; gap: 1px; padding: 0 1px 1px 2px; margin-right: 1px; }
.meter i { width: 3px; background: #1fdff0; }
.meter.solid { padding-left: 1px; }
.meter.solid i { width: 9px; }
.chord-row { display: flex; flex: 1; background: #e8e8e8; color: #111; }
.chord-body { display: flex; flex: 1; padding: 3px 0 0 6px; gap: 25px; align-items: flex-start; }
.chord-body h3 { font: 500 13px/16px "Noto Sans CJK JP", sans-serif; height: 19px; }
.lt { width: 23px; height: 17px; border-radius: 3px; border: 1px solid #6b6d6f; background: linear-gradient(#fff, #ddd); color: #000; }
.lts { display: flex; gap: 2px; }
.lt.teal { background: #35a3a8; } .lt.violet { background: #8087d0; } .lt.long { width: 124px; font-size: 9px; line-height: 15px; white-space: nowrap; }
.split { height: 3px; flex: none; border-top: 2px solid #6f7173; display: flex; justify-content: center; background: #25292c; }
.split i { width: 26px; height: 2px; margin-top: -2px; background: repeating-linear-gradient(90deg, #eee 0 4px, #25292c 4px 6px); }
.lower { flex: 1; min-height: 0; overflow: hidden; }
.track { display: flex; height: 82px; border-bottom: 1px solid #6f7173; }
.track.part { height: 35px; }
.part .pic { margin-top: -7px; }
.track.kid { padding-left: 12px; background: linear-gradient(90deg, #090909 12px, #0000 12px); }
.track.kid .swatch { width: 40px; color: #3b3d3f; align-items: flex-start; padding-right: 4px; font-family: "Liberation Sans", sans-serif; }
.track .swatch svg { color: #fff; }
.track .f { width: 19px; height: 15px; }
.body { flex: 1; min-width: 0; display: grid; grid-template-columns: 48px 1fr; grid-template-rows: 23px 19px 1fr; padding-left: 7px; align-items: start; color: #f2f2f2; }
.folder .body { grid-template-columns: 50px 1fr; }
.ms { display: flex; margin-top: 4px; height: 15px; border-radius: 2px; background: #484c50; box-shadow: 0 0 0 1px #17191b; width: 42px; color: #050505; }
.ms button { flex: 1; }
.ms button + button { border-left: 1px solid #17191b; }
.body h3 { font: bold 13px/21px "Liberation Sans", Arial, sans-serif; color: #fff; }
.ctl { grid-column: 2; display: flex; gap: 4px; color: #0a0a0a; }
.pair { display: flex; width: 46px; height: 15px; border-radius: 2px; background: #484c50; box-shadow: 0 0 0 1px #1b1d1f; }
.pair.aud { width: 49px; }
.pair.three { width: 71px; }
.pair button { flex: 1; height: 15px; }
.rd { background: linear-gradient(#3fd068, #1db049); border-radius: 2px; }
.bl { background: linear-gradient(#93c0ff, #76aaf5); border-radius: 2px; }
.pair.three .rd { margin-left: 1px; }
.vol { width: 47px; height: 15px; margin-left: 50px; text-align: center; background: #484c50; border-radius: 2px; font: bold 10px/15px "Liberation Sans", sans-serif; }
.par { width: 71px; height: 15px; justify-content: flex-start; padding-left: 3px; background: #484c50; border-radius: 2px; font-size: 9px; }
.pic { grid-column: 1; width: 35px; height: 35px; border: 1px solid #1c1e20; border-radius: 3px; }
.mixing { height: 19px; flex: none; display: flex; align-items: center; padding: 0 6px 2px 7px; gap: 12px; color: #b5b5b5; font-size: 12px; }
.mixing span { margin-right: auto; }
.mixing svg { color: #87898b; }
.vsplit { width: 3px; flex: none; background: #6f7173; border-right: 1px solid #1b1d1f; margin: 4px 0 3px; display: flex; align-items: center; }
.vsplit i { width: 2px; height: 26px; background: repeating-linear-gradient(#eee 0 4px, #25292c 4px 6px); }

/* timeline */
.time { flex: 1; min-width: 0; position: relative; display: flex; flex-direction: column; padding: 4px 0; }
.ruler { height: 25px; flex: none; background: #735be6; margin-right: 3px; overflow: hidden; }
.ruler svg, .lane svg { width: 100%; height: 100%; }
.ruler text { font: 600 13px "Open Sans", sans-serif; fill: #fff; }
.lane { height: 82px; overflow: hidden; flex: none; }
.lane[data-kind="arranger"] { height: 14px; }
.lane[data-kind="chord"] { height: 179px; }
.lane[data-kind="analog"] { height: 35px; }
.lanes { flex: 1; min-height: 0; overflow: hidden; }
.hscroll { height: 12px; flex: none; display: flex; align-items: center; color: #b5b5b5; padding-right: 8px; font-size: 14px; line-height: 12px; }
.hscroll .bar { flex: 1; height: 12px; margin-right: 6px; padding: 0 5px; background: #45494c; border-radius: 3px; display: flex; align-items: center; color: #fff; }
.bar i { width: 32px; height: 7px; border-radius: 2px; background: #f2f2f2; margin: 0 auto 0 115px; }
.cv { width: 5px; height: 8px; }
.hscroll span { width: 16px; text-align: center; }
input[type=range] { appearance: none; height: 8px; outline: 0; }
.hscroll input { width: 46px; margin: 0 3px; }
input[type=range]::-webkit-slider-runnable-track { background: linear-gradient(#a5a5a5, #a5a5a5) center / 100% 1px no-repeat; height: 8px; }
input[type=range]::-webkit-slider-thumb { appearance: none; width: 6px; height: 8px; border-radius: 3px; background: #b5b5b5; }
.cursor { position: absolute; left: 231px; top: 4px; bottom: 16px; width: 3px; background: linear-gradient(90deg, #fff 1px, #000 1px 2px, #fff 2px); }
.tip { position: absolute; left: 8px; top: 119px; width: 63px; height: 17px; background: #fff; color: #111; font: bold 11px/16px "Open Sans", sans-serif; text-align: center; white-space: pre; }
.mouse { position: absolute; left: 1px; top: 140px; width: 16px; height: 24px; }

/* right-hand scroll and zoom strip */
.side { width: 16px; flex: none; padding: 4px 4px 3px 0; display: flex; flex-direction: column; color: #b5b5b5; }
.side > * { width: 12px; }
.side .top { height: 22px; margin: 0 0 3px; border-radius: 3px; background: #5d6063; box-shadow: inset 0 0 0 1px #7b7d80; color: #fff; }
.vbar { background: #45494c; border-radius: 3px; display: flex; flex-direction: column; align-items: center; padding: 5px 0; color: #f2f2f2; }
.vbar.up { height: 98px; flex: none; }
.vbar i { width: 8px; height: 49px; background: #f2f2f2; border-radius: 2px; margin: 8px 0 auto; }
.vbar.low { flex: 1; }
.vbar.low i { height: 78px; margin-top: 198px; }
.ch { width: 8px; height: 5px; }
.vz { height: 95px; flex: none; display: flex; flex-direction: column; align-items: center; padding-top: 4px; font-size: 12px; line-height: 11px; }
.vz.two { height: 79px; gap: 6px; padding-top: 7px; }
.vz.end { height: 109px; padding-top: 5px; }
.vz input { writing-mode: vertical-lr; width: 8px; height: 57px; }
.vz input::-webkit-slider-runnable-track { background: linear-gradient(#a5a5a5, #a5a5a5) center / 1px 100% no-repeat; width: 8px; height: 57px; }
.vz .t { margin-bottom: 3px; width: 8px; height: 7px; }
.vz.two input, .vz.two input::-webkit-slider-runnable-track { height: 50px; }

/* transport */
.transport { display: flex; align-items: center; height: 40px; flex: none; padding: 0 4px; background: #25292c; gap: 3px; }
.transport > .group:nth-child(1) { margin-right: 2px; }
.dots { flex: none; width: 3px; height: 12px; margin-right: 2px; background: repeating-linear-gradient(#b5b5b5 0 2px, #0000 2px 3px); }
.aq { width: 38px; height: 25px; border-radius: 3px; background: #f39b3f; color: #222; font-size: 15px; }
.mid { display: flex; align-items: center; gap: 3px; margin: 0 auto; padding-left: 10px; }
.pos { width: 125px; height: 25px; background: #1b1c1f; box-shadow: inset 0 0 0 1px #7b7d80; text-align: right; padding-right: 7px; font-size: 14px; white-space: pre; }
.gapr { margin: 0 2px 0 7px; }
.deck { display: flex; height: 32px; border: 2px solid #c9cacb; border-radius: 4px; overflow: hidden; }
.deck button { width: 49px; height: 28px; }
.cy { background: #8877e6; color: #111; } .st { background: #757779; color: #fff; } .pl { background: #35d936; color: #0a300a; }
.group .pun { width: 38px; }
.gapn { margin-left: 2px; }
.pos.tempo { width: 82px; padding-right: 24px; font-size: 13px; }
.ud { width: 8px; height: 18px; margin-left: -17px; margin-right: 9px; }
.out { width: 89px; background: #1b1c1f; justify-content: flex-end; }
.lvl { display: flex; align-items: flex-end; gap: 1px; height: 22px; width: 63px; border-left: 1px solid #55585b; padding-left: 35px; }
.lvl i { width: 7px; background: #1fdff0; }
```
FILE: timeline.js
```js
// Draws the ruler and the event lanes of the project timeline.
const VIEW_START = 551;   // project pixel at the left edge of the view
const BAR_33 = 783.4;     // project pixel of bar 33
const BAR_WIDTH = 129.02;
const VIEW_END = 4000;

const rect = (x, y, w, h, fill) => `<rect x="${x}" y="${y}" width="${w}" height="${h}" fill="${fill}"/>`;

function grid(y, h, color, strong) {
  let out = '';
  for (let beat = -8; beat < 96; beat++) {
    const x = Math.floor(BAR_33 + beat * BAR_WIDTH / 4) - VIEW_START;
    if (x >= 0 && x < VIEW_END) out += rect(x, y, 1, h, beat % 4 ? color : (strong || color));
  }
  return out;
}

// segments: [x, start amplitude, end amplitude, has a hitpoint]
function wave(segments, center, color) {
  let top = '', bottom = '';
  for (let n = 0; n < segments.length; n++) {
    const [x0, a0, a1] = segments[n];
    const x1 = n + 1 < segments.length ? segments[n + 1][0] : x0 + 60;
    for (let x = x0; x < x1; x++) {
      const t = (x - x0) / (x1 - x0);
      const noise = ((Math.sin(x * 12.9898) * 43758.5453) % 1) * 1.2;
      const base = a1 + (a0 - a1) * Math.pow(1 - t, 1.4);
      const a = base < 2 ? base : base + noise;
      const up = Math.max(1, Math.round(a)), dn = Math.max(1, Math.round(base < 2 ? base : base - noise));
      top += `${x - VIEW_START},${center - up} ${x + 1 - VIEW_START},${center - up} `;
      bottom = `${x + 1 - VIEW_START},${center + dn} ${x - VIEW_START},${center + dn} ` + bottom;
    }
  }
  return `<polygon points="${top}${bottom}" fill="${color}"/>`;
}

const hits = (segments, y, h, color) => segments.filter(s => s[3]).map(s =>
  `<line x1="${s[0] - VIEW_START}.5" x2="${s[0] - VIEW_START}.5" y1="${y}" y2="${y + h}" stroke="${color}" stroke-dasharray="1 1"/>`).join('');

const ANALOG = [[551,1,1],[557,6,5,1],[591,4,4,1],[608,5,5,1],[621,5,5,1],[640,6,4],[658,1,1],[672,6,3,1],[690,1,1],[702,7,7,1],[736,6,3,1],[742,1,1],[751,6,4,1],[784,8,6],[804,1,1],[816,7,7,1],[850,6,5,1],[865,7,6,1],[881,6,5,1],[896,7,7,1],[914,3,1,1],[928,7,6,1],[950,1,1],[960,7,6,1],[978,7,6,1],[1000,1,1],[1010,7,7,1],[1042,7,6,1],[1062,1,1],[1074,6,4,1],[1115,5,3],[1150,1,1],[1157,7,6,1],[1170,1,1],[1186,7,5,1],[1203,7,5,1],[1225,1,1],[1235,6,5,1],[1265,1,1],[1283,7,6,1],[1300,8,6,1],[1330,6,7,1],[1360,6,5,1],[1395,1,1],[1410,7,6,1],[1440,1,1],[1452,7,5,1],[1474,1,1],[1480,7,7,1],[1512,1,1],[1524,7,6,1],[1554,1,1],[1560,7,5,1],[1590,5,4],[1615,1,1],[1621,7,4,1],[1654,6,5,1],[1671,7,6,1],[1689,1,1],[1703,5,3,1],[1733,7,6,1],[1756,8,6],[1782,6,4,1],[1798,5,5,1],[1815,8,6,1],[1836,1,1],[1847,7,6,1],[1868,6,5,1],[1880,7,7,1]];
const LESPAUL = [[551,5,3],[620,1,1,1],[637,9,4,1],[701,7,4,1],[718,4,3],[734,5,3,1],[745,2,2,1],[750,5,4,1],[784,8,5],[800,4,1],[880,1,1,1],[897,9,5,1],[902,6,3,1],[950,2,1],[1015,1,1],[1040,8,4,1],[1090,3,2],[1140,1,1],[1154,8,3,1],[1180,1,1,1],[1187,8,3,1],[1220,7,2,1],[1250,5,3,1],[1262,5,4,1],[1299,9,5],[1320,4,1],[1398,1,1,1],[1413,9,4,1],[1440,3,1],[1530,1,1],[1557,8,3,1],[1620,2,1],[1660,1,1],[1672,9,4,1],[1715,4,2,1],[1738,7,3,1],[1768,5,3,1],[1784,6,4,1],[1815,8,4,1],[1860,4,2]];
const TELE1 = [[551,3,3],[559,7,3,1],[580,3,2],[607,6,4,1],[621,4,2,1],[638,6,5,1],[662,3,3],[670,6,5,1],[687,5,3,1],[704,7,4,1],[720,4,3,1],[736,5,4,1],[751,6,4,1],[781,3,3,1],[784,6,3],[817,7,5,1],[840,4,3],[865,6,3,1],[897,6,4,1],[915,4,3],[945,6,6,1],[963,4,4,1],[978,6,4,1],[1009,6,5,1],[1024,4,3,1],[1042,5,2,1],[1074,6,5,1],[1120,6,5,1],[1155,7,4,1],[1187,6,4,1],[1202,6,4,1],[1235,4,3,1],[1250,6,4,1],[1283,5,3,1],[1299,6,3],[1332,7,5,1],[1380,6,4,1],[1412,7,4,1],[1460,5,4,1],[1490,6,4,1],[1525,5,3,1],[1558,6,3,1],[1590,7,5,1],[1637,6,4,1],[1671,6,4,1],[1700,6,5,1],[1738,5,3,1],[1768,6,4,1],[1800,4,3,1],[1815,6,4,1],[1848,7,4,1]];
const TELE2 = [[551,3,3],[559,6,2,1],[607,6,3,1],[620,5,1,1],[638,6,3,1],[675,3,1],[720,1,1],[784,5,4],[816,6,3,1],[866,5,6,1],[881,2,1],[896,6,3,1],[930,2,1],[980,1,1],[1040,3,1,1],[1053,1,1,1],[1058,1,1,1],[1074,6,5,1],[1100,4,2],[1120,6,2,1],[1140,1,1],[1155,7,3,1],[1190,2,1],[1240,1,1],[1299,4,4,1],[1332,7,3,1],[1380,6,4,1],[1412,7,3,1],[1450,2,1],[1500,1,1],[1558,5,4,1],[1592,6,3,1],[1637,7,4,1],[1660,2,2],[1671,6,3,1],[1710,2,1],[1760,1,1],[1815,5,4,1],[1848,7,3,1]];
const NOTES = [[551,636,28],[638,783,25],[785,861,14],[863,880,28],[880,899,14],[896,1040,19],[1041,1155,28],[1154,1180,25],[1179,1183,28],[1186,1204,25],[1218,1236,25],[1251,1269,25],[1283,1295,19],[1299,1410,14],[1411,1556,19],[1558,1640,28],[1638,1655,42],[1655,1669,28],[1669,1798,25],[1798,1815,19],[1815,1891,14],[1896,1960,28]];

const open = () => rect(0, 0, '100%', '100%', '#29303a') + grid(0, 200, '#53585f', '#777b7f') + rect(0, 81, '100%', 1, '#474d59');

function audio(segments) {
  return open() + rect(0, 1, '100%', 79, '#0d1c0b') + rect(0, 2, '100%', 77, '#182514') + grid(3, 75, '#29441f')
    + rect(0, 2, '100%', 1, '#43983a') + rect(0, 78, '100%', 1, '#43983a')
    + wave(segments, 22, '#4fdb3b') + wave(segments, 60, '#4fdb3b') + hits(segments, 6, 70, '#2fae22');
}

const goldClip = () => open() + rect(0, 1, '100%', 79, '#a87c0c') + rect(0, 2, '100%', 77, '#ffd265')
  + rect(0, 3, '100%', 75, '#e6b93b') + grid(3, 75, '#c6981f');

const painters = {
  arranger: () => rect(0, 0, '100%', '100%', '#1e1523') + grid(0, 13, '#382a48') + rect(0, 2, '100%', 1, '#7c55a8')
    + rect(0, 10, '100%', 1, '#7c55a8') + rect(0, 13, '100%', 1, '#474d59'),
  chord: () => rect(0, 0, '100%', '100%', '#29303a') + rect(0, 165, '100%', 14, '#3d464f') + grid(0, 179, '#53585f', '#777b7f'),
  analog: () => rect(0, 0, '100%', '100%', '#29303a') + grid(0, 35, '#53585f', '#777b7f') + rect(0, 0, '100%', 32, '#261f14')
    + grid(0, 31, '#4b3d22') + rect(0, 31, '100%', 1, '#a8843a') + wave(ANALOG, 13, '#e6b93b') + hits(ANALOG, 1, 27, '#c9941a'),
  bassfolder: () => goldClip() + rect(0, 4, '100%', 35, '#c08d09'),
  electro: () => goldClip() + NOTES.map(n => rect(n[0] - VIEW_START, n[2], n[1] - n[0], 5, '#8e6b14')).join(''),
  bass: () => open() + rect(0, 19, '100%', 62, '#3a4a4a30') + rect(0, 19, '100%', 1, '#a9b5b8'),
  guitars: () => open() + rect(0, 1, '100%', 79, '#1e9a12') + rect(0, 2, '100%', 77, '#7df56b') + rect(0, 3, '100%', 75, '#4fdb3b')
    + grid(3, 75, '#35b326') + rect(0, 4, '100%', 16, '#20b80e') + rect(0, 22, '100%', 16, '#20b80e') + rect(0, 40, '100%', 17, '#20b80e'),
  lespaul: () => audio(LESPAUL),
  tele1: () => audio(TELE1),
  tele2: () => audio(TELE2),
  group: () => rect(0, 0, '100%', '100%', '#29303a') + rect(0, 18, '100%', '100%', '#3d4f49') + grid(0, 82, '#5d6a66', '#77837d') + rect(0, 18, '100%', 2, '#76a06c')
};

document.querySelectorAll('.lane').forEach(lane => {
  lane.innerHTML = `<svg shape-rendering="crispEdges">${painters[lane.dataset.kind]()}</svg>`;
});

let marks = grid(0, 9, '#b9aef2', '#fff');
for (let bar = 32; bar < 60; bar++) {
  const x = Math.floor(BAR_33 + (bar - 33) * BAR_WIDTH) - VIEW_START;
  marks += rect(x, 0, 1, 24, '#fff') + `<text x="${x + 5}" y="21">${bar}</text>`;
}
document.querySelector('.ruler').innerHTML = `<svg shape-rendering="crispEdges">${marks}</svg>`;
```
